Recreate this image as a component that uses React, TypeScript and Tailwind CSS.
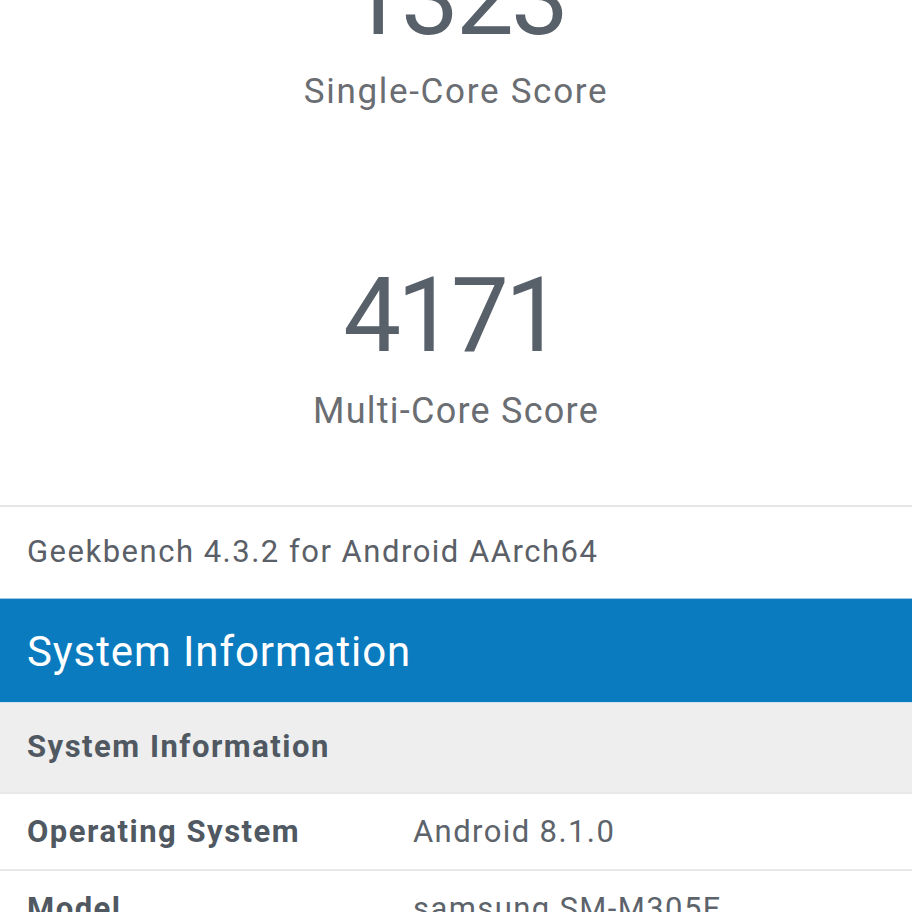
import React from "react";

const rows = [
  { label: "Operating System", value: "Android 8.1.0" },
  { label: "Model", value: "samsung SM-M305F" },
  { label: "Processor", value: "Samsung Exynos 7904" },
];

export default function App() {
  return (
    <div className="h-[912px] w-[912px] overflow-hidden bg-white font-['Roboto',sans-serif]">
      {/* scores */}
      <div className="flex flex-col items-center border-b-2 border-[#e6e6e6] pb-[76px]">
        <div className="mt-[-53px] text-[103px] leading-[103px] tracking-[-3px] text-[#58606a]">1323</div>
        <div className="mt-[24px] text-[35px] leading-[35px] tracking-[1.7px] text-[#6a6d72]">Single-Core Score</div>
        <div className="mt-[155px] mr-[10px] text-[103px] leading-[103px] tracking-[-4px] text-[#58606a]">4171</div>
        <div className="mt-[26px] text-[36px] leading-[36px] tracking-[1.25px] text-[#6a6d72]">Multi-Core Score</div>
      </div>

      <div className="px-[27px] pt-[29px] pb-[31px] text-[31px] leading-[31px] tracking-[1.5px] text-[#5b6068]">
        Geekbench 4.3.2 for Android AArch64
      </div>

      <div className="border-t border-[#9cc8e4] bg-[#0a7bbf] px-[27px] pt-[32px] pb-[29px] text-[42px] leading-[42px] tracking-[0.9px] text-white">
        System Information
      </div>

      <div className="border-t border-[#cfe3f0] bg-[#eeeeee] px-[27px] pt-[28px] pb-[30px] text-[31px] font-bold leading-[31px] tracking-[1.5px] text-[#505862]">
        System Information
      </div>

      {rows.map((r) => (
        <div key={r.label} className="flex border-t-2 border-[#e8e8e8] px-[27px] pt-[22px] pb-[22px] text-[31px] leading-[31px]">
          <div className="w-[386px] font-bold tracking-[1.5px] text-[#505862]">{r.label}</div>
          <div className="tracking-[1.4px] text-[#5d636b]">{r.value}</div>
        </div>
      ))}
    </div>
  );
}
